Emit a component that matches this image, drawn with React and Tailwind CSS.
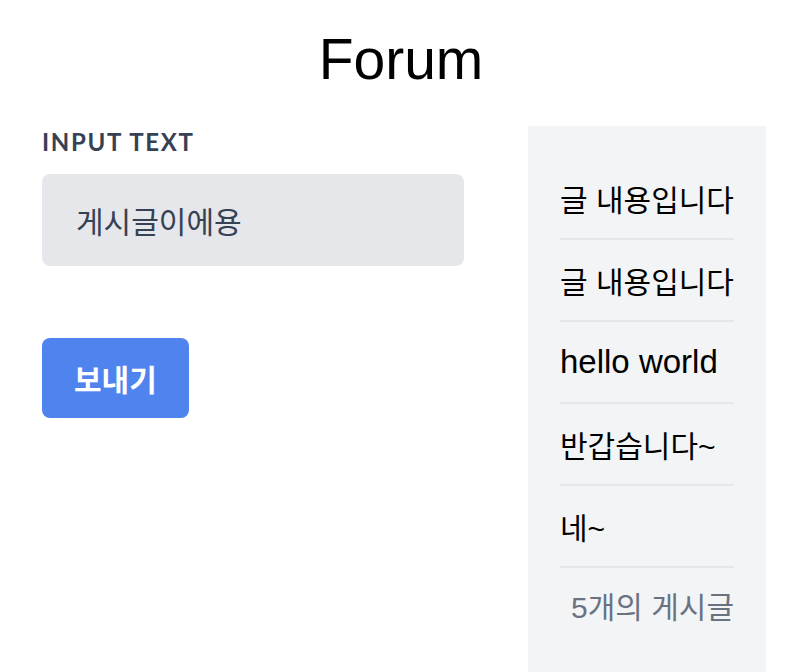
const posts = [
    { text: '글 내용입니다', ko: true },
    { text: '글 내용입니다', ko: true },
    { text: 'hello world', ko: false },
    { text: '반갑습니다~', ko: true },
    { text: '네~', ko: true },
];

export default function App() {
    return (
        <div className="min-h-[672px] bg-white font-['Liberation_Sans','Noto_Sans_CJK_KR',sans-serif]">
            {/* Title */}
            <h1 className="pt-[29px] text-center text-[57px] leading-[60px] text-black">Forum</h1>

            <div className="mt-[37px] flex items-start pl-[42px]">
                {/* Form */}
                <div className="w-[422px]">
                    <label className="block font-['Lato','Noto_Sans_CJK_KR',sans-serif] text-[24px] font-bold uppercase leading-[32px] tracking-[0.07em] text-gray-700">
                        Input text
                    </label>
                    <div className="mt-4 flex h-[92px] items-center rounded-lg bg-gray-200 px-[34px] font-['Noto_Sans_CJK_KR',sans-serif] text-[30px] text-gray-700">
                        게시글이에용
                    </div>
                    <button className="mt-[72px] flex h-[80px] items-center rounded-lg bg-[#4f84ee] px-8 font-['Noto_Sans_CJK_KR',sans-serif] text-[30px] font-bold text-white">
                        보내기
                    </button>
                </div>

                {/* Post list */}
                <div className="ml-[64px] min-h-[546px] w-[238px] bg-gray-100 px-8 pt-8">
                    <ul>
                        {posts.map((post, i) => (
                            <li
                                key={i}
                                className={
                                    post.ko
                                        ? 'whitespace-nowrap border-b-2 border-gray-200 pt-[19px] pb-[13px] text-[30px] leading-[48px] text-black'
                                        : 'whitespace-nowrap border-b-2 border-gray-200 py-4 text-[33px] leading-[48px] text-black'
                                }
                            >
                                {post.text}
                            </li>
                        ))}
                    </ul>
                    <p className="whitespace-nowrap pt-[19px] pb-[13px] text-right text-[30px] leading-[42px] text-gray-500">
                        5개의 게시글
                    </p>
                </div>
            </div>
        </div>
    );
}
